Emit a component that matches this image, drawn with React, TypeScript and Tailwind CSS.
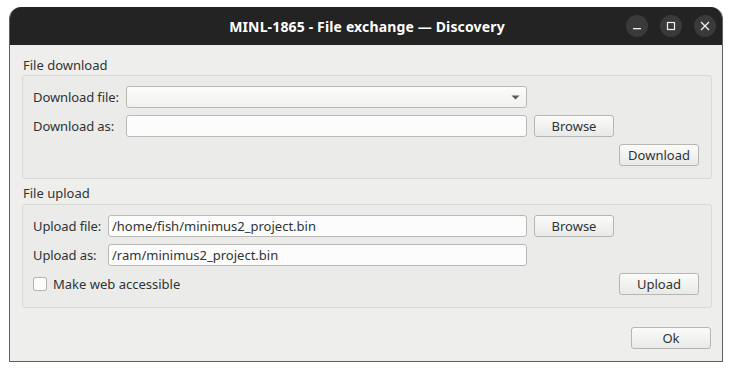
import React from "react";

const font = { fontFamily: '"Noto Sans", "DejaVu Sans", sans-serif' };

function Btn({ children, className = "" }: { children: React.ReactNode; className?: string }) {
  return (
    <div
      className={
        "h-[22px] w-[80px] flex items-center justify-center pt-[2px] rounded-[3px] border border-[#b6b6b3] bg-gradient-to-b from-[#fbfbfa] to-[#e9e9e7] text-[13px] text-[#2e3436] " +
        className
      }
    >
      {children}
    </div>
  );
}

function Input({ value = "" }: { value?: string }) {
  return (
    <div className="h-[22px] flex-1 rounded-[3px] border border-[#b9b9b6] bg-[#fcfcfc] px-[3px] pt-[2px] flex items-center text-[13px] text-[#2e3436] whitespace-nowrap overflow-hidden">
      {value}
    </div>
  );
}

function Label({ children, w }: { children: React.ReactNode; w: string }) {
  return <div className={"text-[13px] text-[#2e3436] shrink-0 pt-[2px] tracking-[-0.1px] " + w}>{children}</div>;
}

export default function App() {
  return (
    <div className="w-[732px] h-[371px] bg-white pt-[7px] pl-[9px]" style={font}>
      <div className="w-[714px] h-[355px] flex flex-col rounded-t-[12px] overflow-hidden border-x border-b border-[#5e5e5e] bg-[#eeeeec]">
        {/* title bar */}
        <div className="h-[38px] shrink-0 bg-[#232323] relative flex items-center justify-center -mx-px">
          <div className="text-white font-bold text-[14px] tracking-[0.15px] ml-[2px]">MINL-1865 - File exchange — Discovery</div>
          <div className="absolute right-[7px] top-[8px] flex gap-[12px]">
            <div className="w-[22px] h-[22px] rounded-full bg-[#3a3a3a] flex items-center justify-center">
              <svg width="10" height="10" viewBox="0 0 10 10">
                <rect x="1" y="7" width="8" height="1.3" fill="#f0f0f0" />
              </svg>
            </div>
            <div className="w-[22px] h-[22px] rounded-full bg-[#3a3a3a] flex items-center justify-center">
              <svg width="10" height="10" viewBox="0 0 10 10">
                <rect x="1.5" y="1.5" width="7" height="7" fill="none" stroke="#f0f0f0" strokeWidth="1.2" />
              </svg>
            </div>
            <div className="w-[22px] h-[22px] rounded-full bg-[#3a3a3a] flex items-center justify-center">
              <svg width="10" height="10" viewBox="0 0 10 10">
                <path d="M1 1 L9 9 M9 1 L1 9" stroke="#f0f0f0" strokeWidth="1.3" />
              </svg>
            </div>
          </div>
        </div>

        {/* content */}
        <div className="flex flex-col pl-[12px] pr-[10px] pt-[11px]">
          <div className="text-[13px] leading-[16px] text-[#2e3436] pl-[1px] pt-[1px]">File download</div>
          <div className="mt-[2px] h-[104px] rounded-[3px] border border-[#d8d8d5] bg-[#ebebe9] pl-[10px] pr-[12px] pt-[10px] flex flex-col gap-[7px]">
            <div className="flex items-center h-[22px]">
              <Label w="w-[93px]">Download file:</Label>
              <div className="h-[22px] w-[401px] rounded-[3px] border border-[#b9b9b6] bg-gradient-to-b from-[#fcfcfc] to-[#f1f1f0] relative">
                <svg className="absolute right-[6px] top-[8px]" width="9" height="5" viewBox="0 0 9 5">
                  <path d="M0.5 0.5 L8.5 0.5 L4.5 4.5 Z" fill="#5a5a5a" />
                </svg>
              </div>
            </div>
            <div className="flex items-center h-[22px]">
              <Label w="w-[93px]">Download as:</Label>
              <div className="w-[401px] flex"><Input /></div>
              <Btn className="ml-[7px]">Browse</Btn>
            </div>
            <div className="flex items-center justify-end h-[22px]">
              <Btn>Download</Btn>
            </div>
          </div>

          <div className="mt-[5px] text-[13px] leading-[16px] text-[#2e3436] pl-[1px] pt-[1px]">File upload</div>
          <div className="mt-[3px] h-[104px] rounded-[3px] border border-[#d8d8d5] bg-[#ebebe9] pl-[10px] pr-[12px] pt-[10px] flex flex-col gap-[7px]">
            <div className="flex items-center h-[22px]">
              <Label w="w-[75px]">Upload file:</Label>
              <div className="w-[419px] flex"><Input value="/home/fish/minimus2_project.bin" /></div>
              <Btn className="ml-[7px]">Browse</Btn>
            </div>
            <div className="flex items-center h-[22px]">
              <Label w="w-[75px]">Upload as:</Label>
              <div className="w-[419px] flex"><Input value="/ram/minimus2_project.bin" /></div>
            </div>
            <div className="flex items-center justify-between h-[22px]">
              <div className="flex items-center gap-[6px]">
                <div className="w-[14px] h-[14px] rounded-[2px] border border-[#b3b3b0] bg-[#fcfcfc]" />
                <div className="text-[13px] text-[#2e3436] pt-[2px]">Make web accessible</div>
              </div>
              <Btn>Upload</Btn>
            </div>
          </div>

          <div className="mt-[19px] flex justify-end pr-[1px]">
            <Btn>Ok</Btn>
          </div>
        </div>
      </div>
    </div>
  );
}
